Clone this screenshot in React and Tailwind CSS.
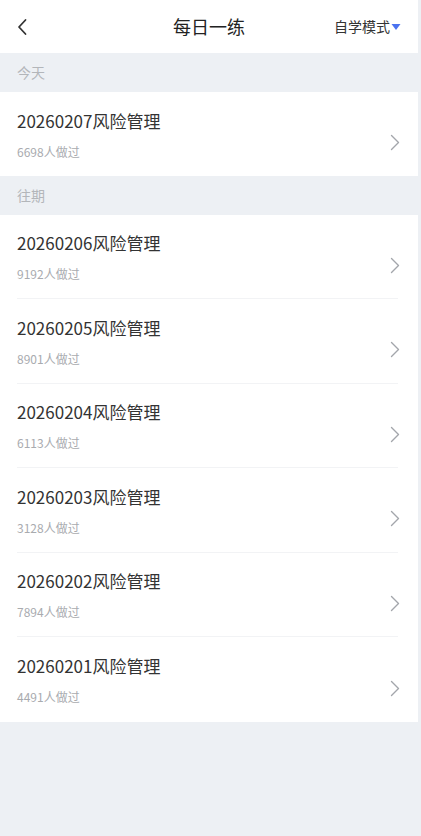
import React from 'react';

const past = [
  { date: '20260206', count: 9192 },
  { date: '20260205', count: 8901 },
  { date: '20260204', count: 6113 },
  { date: '20260203', count: 3128 },
  { date: '20260202', count: 7894 },
  { date: '20260201', count: 4491 },
];

const Chevron = () => (
  <svg width="10" height="17" viewBox="0 0 10 17" fill="none">
    <path d="M1.5 1.5L8.5 8.5L1.5 15.5" stroke="#a3a6ab" strokeWidth="1.4" strokeLinecap="round" strokeLinejoin="round" />
  </svg>
);

const Item = ({ date, count, last }) => (
  <div className="pl-[17px] pr-[20px] bg-white">
    <div className={`h-[84.5px] flex items-center justify-between ${last ? '' : 'border-b border-[#f2f3f5]'}`}>
      <div className="flex flex-col pt-[2px]">
        <div className="text-[17px] leading-[22px] text-[#333333]">{date}风险管理</div>
        <div className="mt-[12px] text-[12px] leading-[16px] text-[#a9abaf]">{count}人做过</div>
      </div>
      <div className="mt-[18px] mr-[-2px]">
        <Chevron />
      </div>
    </div>
  </div>
);

const SectionHeader = ({ label }) => (
  <div className="h-[38.5px] flex items-center pl-[17px] text-[14px] text-[#b3b6ba]">{label}</div>
);

const App = () => {
  return (
    <div
      className="min-h-[836px] bg-[#edf0f4]"
      style={{ fontFamily: '"Noto Sans CJK SC", "Noto Sans", sans-serif' }}
    >
      <div className="w-[418px]">
        <div className="h-[53px] bg-white flex items-center justify-between relative">
          <button className="pl-[16px] pr-2 h-full flex items-center">
            <svg width="12" height="18" viewBox="0 0 12 18" fill="none">
              <path d="M9.5 2L3 9L9.5 16" stroke="#333" strokeWidth="1.8" strokeLinecap="round" strokeLinejoin="round" />
            </svg>
          </button>
          <div className="absolute left-0 right-0 text-center text-[18px] font-normal text-[#222222] pointer-events-none">每日一练</div>
          <div className="pr-[17px] flex items-center text-[14px] text-[#333]">
            自学模式
            <svg width="10" height="8" viewBox="0 0 10 8" className="ml-[1px]">
              <path d="M0.5 1H9.5L5 7Z" fill="#4a72f0" />
            </svg>
          </div>
        </div>
        <SectionHeader label="今天" />
        <Item date="20260207" count={6698} last />
        <SectionHeader label="往期" />
        {past.map((p, i) => (
          <Item key={p.date} date={p.date} count={p.count} last={i === past.length - 1} />
        ))}
      </div>
    </div>
  );
};

export default App;
